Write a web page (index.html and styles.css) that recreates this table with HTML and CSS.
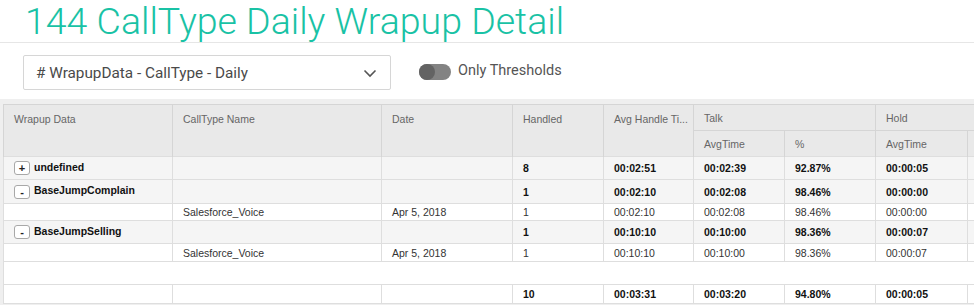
FILE: index.html
```html
<!DOCTYPE html>
<html>
<head>
<meta charset="utf-8">
<link rel="stylesheet" href="styles.css">
</head>
<body>
<header class="page-head">
  <h1 class="title">144 CallType Daily Wrapup Detail</h1>
</header>
<div class="controls">
  <div class="select">
    <span class="select-text"># WrapupData - CallType - Daily</span>
    <svg class="chev" width="14" height="9" viewBox="0 0 14 9"><path d="M1.5 1.5 L7 7 L12.5 1.5" fill="none" stroke="#555" stroke-width="1.6"/></svg>
  </div>
  <div class="toggle"><span class="knob"></span></div>
  <span class="toggle-label">Only Thresholds</span>
</div>
<main class="grid-area">
  <table class="grid">
    <colgroup>
      <col class="c1"><col class="c2"><col class="c3"><col class="c4"><col class="c5"><col class="c6"><col class="c7"><col class="c8"><col class="c9">
    </colgroup>
    <thead>
      <tr class="h1">
        <th rowspan="2" class="top">Wrapup Data</th>
        <th rowspan="2" class="top">CallType Name</th>
        <th rowspan="2" class="top">Date</th>
        <th rowspan="2" class="top">Handled</th>
        <th rowspan="2" class="top narrow" title="Avg Handle Time">Avg Handle Ti...</th>
        <th colspan="2">Talk</th>
        <th colspan="2">Hold</th>
      </tr>
      <tr class="h2">
        <th>AvgTime</th>
        <th>%</th>
        <th>AvgTime</th>
        <th></th>
      </tr>
    </thead>
    <tbody>
      <tr class="group">
        <td><span class="btn">+</span>undefined</td><td></td><td></td><td>8</td><td>00:02:51</td><td>00:02:39</td><td>92.87%</td><td>00:00:05</td><td></td>
      </tr>
      <tr class="group tall">
        <td><span class="btn">-</span>BaseJumpComplain</td><td></td><td></td><td>1</td><td>00:02:10</td><td>00:02:08</td><td>98.46%</td><td>00:00:00</td><td></td>
      </tr>
      <tr class="detail">
        <td></td><td>Salesforce_Voice</td><td>Apr 5, 2018</td><td>1</td><td>00:02:10</td><td>00:02:08</td><td>98.46%</td><td>00:00:00</td><td></td>
      </tr>
      <tr class="group">
        <td><span class="btn">-</span>BaseJumpSelling</td><td></td><td></td><td>1</td><td>00:10:10</td><td>00:10:00</td><td>98.36%</td><td>00:00:07</td><td></td>
      </tr>
      <tr class="detail detail-b">
        <td></td><td>Salesforce_Voice</td><td>Apr 5, 2018</td><td>1</td><td>00:10:10</td><td>00:10:00</td><td>98.36%</td><td>00:00:07</td><td></td>
      </tr>
      <tr class="spacer"><td colspan="9"></td></tr>
      <tr class="total">
        <td></td><td></td><td></td><td>10</td><td>00:03:31</td><td>00:03:20</td><td>94.80%</td><td>00:00:05</td><td></td>
      </tr>
    </tbody>
  </table>
</main>
</body>
</html>
```
FILE: styles.css
```css
html, body {
  margin: 0;
  padding: 0;
  background: #ffffff;
  overflow: hidden;
  width: 974px;
  height: 305px;
}
body {
  font-family: "Liberation Sans", Arial, sans-serif;
}
.page-head {
  border-bottom: 1px solid #e6e6e6;
}
.title {
  margin: 0;
  padding-left: 25px;
  font-family: Roboto, "Liberation Sans", sans-serif;
  font-weight: 300;
  font-size: 37.5px;
  line-height: 42px;
  height: 42px;
  color: #19c2a5;
  white-space: nowrap;
}
.controls {
  display: flex;
  height: 56px;
  padding: 12px 0 0 23px;
  box-sizing: border-box;
  align-items: flex-start;
}
.select {
  width: 368px;
  height: 35px;
  box-sizing: border-box;
  border: 1px solid #d6d6d6;
  border-radius: 2px;
  display: flex;
  align-items: center;
  justify-content: space-between;
  padding: 0 13px 0 12px;
}
.select-text {
  font-family: Roboto, "Liberation Sans", sans-serif;
  font-size: 15.3px;
  color: #4a4a4a;
}
.chev { margin-top: 1px; }
.toggle {
  margin: 9px 0 0 28px;
  width: 32px;
  height: 16px;
  border-radius: 8px;
  background: #838383;
  display: flex;
  align-items: center;
}
.knob {
  width: 16px;
  height: 16px;
  border-radius: 50%;
  background: #636363;
}
.toggle-label {
  margin: 7px 0 0 7px;
  font-family: Roboto, "Liberation Sans", sans-serif;
  font-size: 14.5px;
  color: #555555;
}
.grid-area {
  background: #efefef;
  padding: 5px 0 0 3px;
  height: 206px;
  box-sizing: border-box;
  overflow: hidden;
}
.grid {
  border-collapse: collapse;
  table-layout: fixed;
  width: 1057px;
  font-size: 10.5px;
  background: #ffffff;
}
.c1 { width: 169px; }
.c2 { width: 209px; }
.c3 { width: 131px; }
.c4 { width: 91px; }
.c5 { width: 90px; }
.c6 { width: 91px; }
.c7 { width: 91px; }
.c8 { width: 92px; }
.c9 { width: 92px; }
.grid th {
  background: #e9e9e9;
  color: #666666;
  font-weight: normal;
  text-align: left;
  padding: 0 10px;
  border: 1px solid #d5d5d5;
  white-space: nowrap;
  overflow: hidden;
}
.grid th.top {
  vertical-align: top;
  padding-top: 8px;
}
.grid th.narrow { padding-right: 2px; }
.h1 th { height: 26px; box-sizing: border-box; }
.h2 th {
  height: 25px;
  border-bottom: 1px dotted #8a8a8a;
}
.h1 th.top { border-bottom: 1px dotted #8a8a8a; }
.grid td {
  padding: 0 10px;
  border: 1px solid #dedede;
  white-space: nowrap;
  overflow: hidden;
  color: #333333;
}
.group td {
  background: #f5f5f5;
  font-weight: bold;
  color: #111111;
  height: 22px;
}
.group.tall td { height: 23px; }
.detail td { height: 16px; }
.detail-b td { height: 17px; }
.total td {
  height: 18px;
  font-weight: bold;
  color: #111111;
}
.spacer td { height: 22px; }
.btn {
  display: inline-block;
  box-sizing: border-box;
  width: 16px;
  height: 14px;
  border: 1px solid #a8a8a8;
  border-radius: 3px;
  background: #ffffff;
  text-align: center;
  line-height: 12px;
  font-size: 11px;
  margin-right: 4px;
  vertical-align: middle;
  color: #222222;
}
```
